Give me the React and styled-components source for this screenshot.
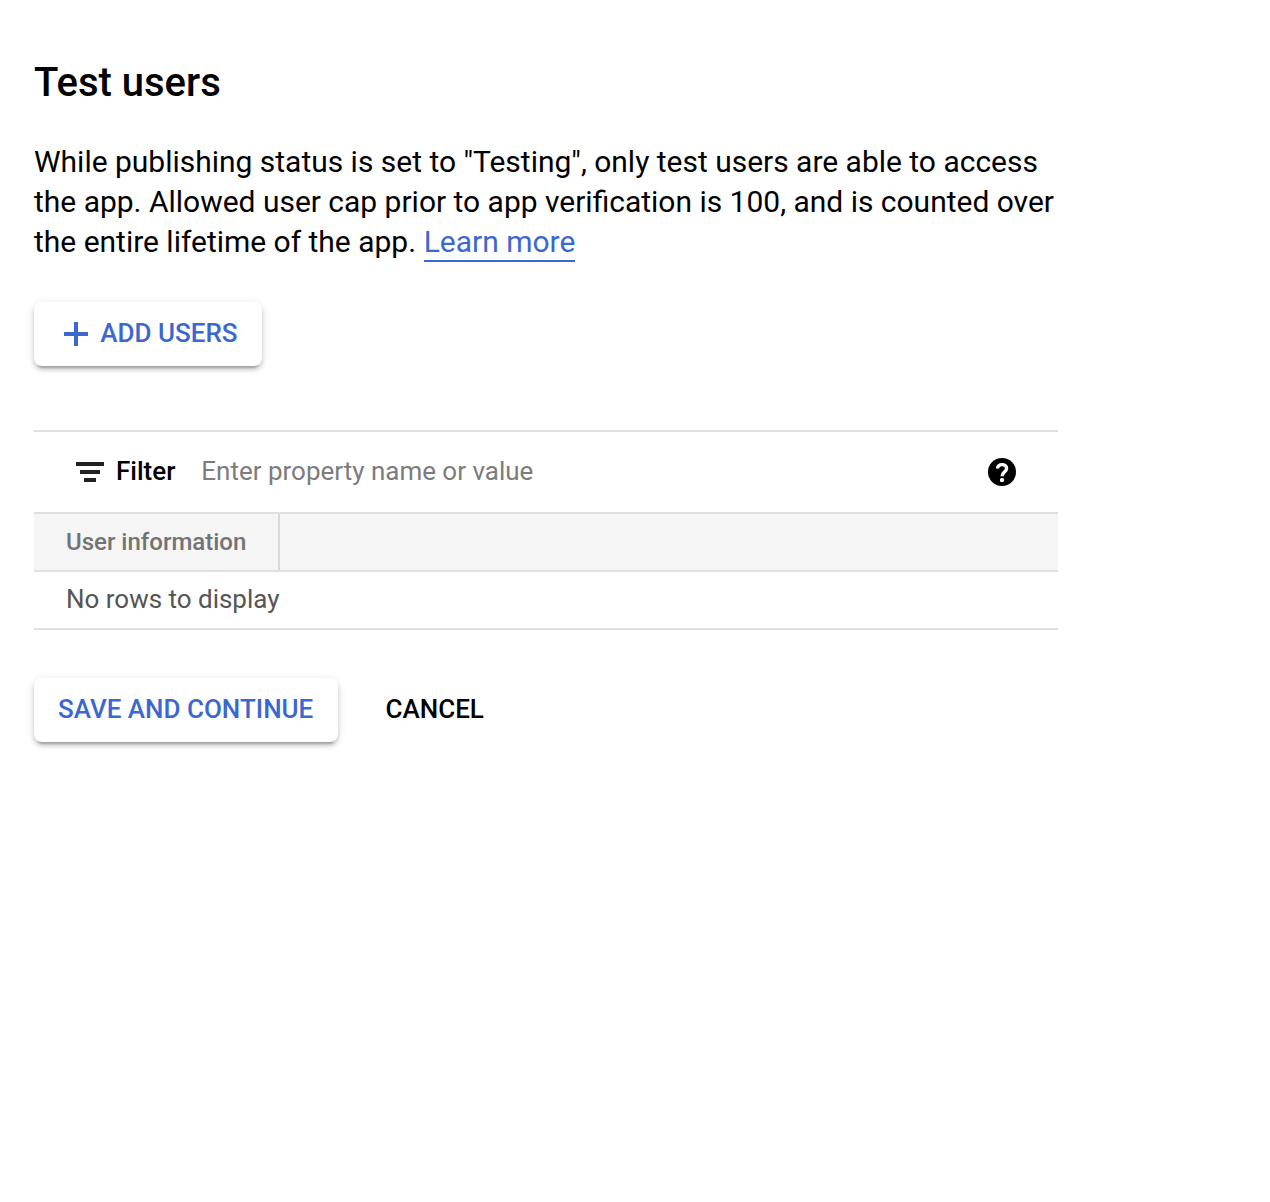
import React from "react";
import styled, { createGlobalStyle } from "styled-components";

const GlobalStyle = createGlobalStyle`
  body {
    margin: 0;
    background: #fff;
    color: #000;
    font-family: Roboto, "Liberation Sans", sans-serif;
  }
`;

const Page = styled.main`
  box-sizing: border-box;
  width: 1058px;
  min-height: 100vh;
  padding: 59px 0 0 34px;
`;

const Title = styled.h1`
  margin: 0;
  font-size: 40px;
  font-weight: 500;
  line-height: 48px;
`;

const Description = styled.p`
  margin: 35px 0 0;
  font-size: 29.98px;
  line-height: 40px;
  white-space: nowrap;
`;

const Link = styled.a`
  margin-left: 0.2px;
  padding-bottom: 1px;
  color: #3c67d0;
  text-decoration: none;
  border-bottom: 2px solid #3c67d0;
`;

const Actions = styled.div`
  display: flex;
  gap: 23.5px;
  margin-top: ${(p) => p.$top}px;
`;

const Button = styled.button`
  display: flex;
  align-items: center;
  box-sizing: border-box;
  height: 64px;
  min-width: ${(p) => p.$minWidth || 0}px;
  margin: 0;
  padding: 0 24px;
  border: 0;
  border-radius: 8px;
  background: #fff;
  color: ${(p) => (p.$raised ? "#3c67d0" : "#000")};
  box-shadow: ${(p) =>
    p.$raised
      ? "0 6px 2px -4px rgba(0, 0, 0, 0.2), 0 4px 4px 0 rgba(0, 0, 0, 0.14), 0 2px 10px 0 rgba(0, 0, 0, 0.12)"
      : "none"};
  font: 500 26px/62px Roboto, "Liberation Sans", sans-serif;
  white-space: nowrap;
`;

const ButtonLabel = styled.span`
  padding-bottom: 2px;
`;

const PlusIcon = styled.svg`
  width: 24px;
  height: 24px;
  margin: 0 12.3px 0 6px;
`;

const Table = styled.section`
  margin-top: 64px;
  border-top: 2px solid #e0e0e0;
`;

const FilterBar = styled.div`
  display: flex;
  align-items: center;
  height: 80px;
  padding: 0 42px;
  border-bottom: 2px solid #e0e0e0;
`;

const FilterIcon = styled.svg`
  width: 28px;
  height: 20px;
  margin-right: 12px;
`;

const FilterLabel = styled.span`
  font-size: 26px;
  font-weight: 500;
  line-height: 32px;
  margin: -2px 26px 0 0;
`;

const FilterInput = styled.input`
  flex: 1;
  min-width: 0;
  height: 32px;
  margin: -2px 0 0;
  padding: 0;
  border: 0;
  outline: 0;
  background: none;
  font: 400 25.97px/32px Roboto, "Liberation Sans", sans-serif;

  &::placeholder {
    color: #7c7c7c;
    opacity: 1;
  }
`;

const HelpIcon = styled.svg`
  width: 28px;
  height: 28px;
`;

const HeaderRow = styled.div`
  display: flex;
  height: 56px;
  background: #f5f5f5;
  border-bottom: 2px solid #e0e0e0;
`;

const HeaderCell = styled.div`
  box-sizing: border-box;
  width: 246px;
  padding-left: 32px;
  border-right: 2px solid #d8d8d8;
  color: #737373;
  font-size: 24px;
  font-weight: 500;
  line-height: 56px;
`;

const EmptyRow = styled.div`
  height: 56px;
  padding-left: 32px;
  border-bottom: 2px solid #e0e0e0;
  color: #555;
  font-size: 25.97px;
  line-height: 55px;
`;

export default function App() {
  return (
    <>
      <GlobalStyle />
      <Page>
        <Title>Test users</Title>
        <Description>
          While publishing status is set to "Testing", only test users are able to access
          <br />
          the app. Allowed user cap prior to app verification is 100, and is counted over
          <br />
          the entire lifetime of the app. <Link>Learn more</Link>
        </Description>
        <Actions $top={40}>
          <Button $raised $minWidth={228}>
            <PlusIcon viewBox="0 0 24 24" aria-hidden="true">
              <path d="M10 0h4v10h10v4H14v10h-4V14H0v-4h10z" fill="#3c67d0" />
            </PlusIcon>
            <ButtonLabel>ADD USERS</ButtonLabel>
          </Button>
        </Actions>
        <Table>
          <FilterBar>
            <FilterIcon viewBox="0 0 28 20" aria-hidden="true">
              <path d="M0 0h28v4H0zM4 8h20v4H4zM8 16h12v4H8z" fill="#212121" />
            </FilterIcon>
            <FilterLabel>Filter</FilterLabel>
            <FilterInput placeholder="Enter property name or value" />
            <HelpIcon viewBox="0 0 28 28" aria-hidden="true">
              <circle cx="14" cy="14" r="14" fill="#000" />
              <path
                d="M9.5 10.4C9.5 8.2 11.4 6.6 14 6.6s4.6 1.5 4.6 3.8c0 3.2-4.5 3.7-4.5 7.9"
                fill="none"
                stroke="#fff"
                strokeWidth="3.4"
              />
              <circle cx="14" cy="22.1" r="2.2" fill="#fff" />
            </HelpIcon>
          </FilterBar>
          <HeaderRow>
            <HeaderCell>User information</HeaderCell>
          </HeaderRow>
          <EmptyRow>No rows to display</EmptyRow>
        </Table>
        <Actions $top={48}>
          <Button $raised $minWidth={304}>
            <ButtonLabel>SAVE AND CONTINUE</ButtonLabel>
          </Button>
          <Button>
            <ButtonLabel>CANCEL</ButtonLabel>
          </Button>
        </Actions>
      </Page>
    </>
  );
}
